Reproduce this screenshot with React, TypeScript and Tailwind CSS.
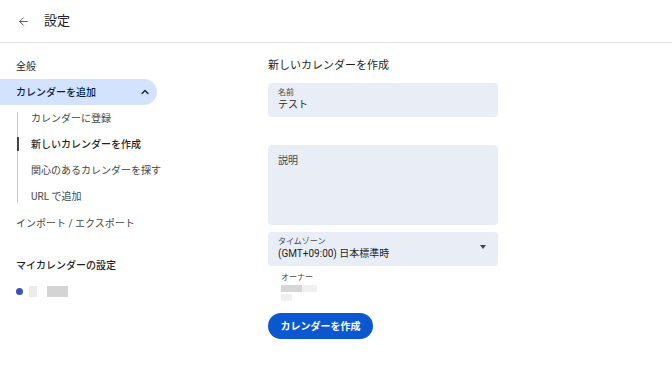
import React from 'react';
import { ArrowLeft, ChevronUp } from 'lucide-react';

const font = { fontFamily: 'Roboto, "Noto Sans CJK JP", sans-serif' };

const subItems = [
  { label: 'カレンダーに登録', active: false },
  { label: '新しいカレンダーを作成', active: true },
  { label: '関心のあるカレンダーを探す', active: false },
  { label: 'URL で追加', active: false },
];

export default function App() {
  return (
    <div className="w-[672px] h-[378px] bg-white text-[#1f1f1f] overflow-hidden" style={font}>
      {/* ヘッダー */}
      <div className="h-[43px] flex items-center border-b border-[#e3e3e3] pl-[17px]">
        <ArrowLeft size={13} strokeWidth={1.6} className="text-[#444746]" />
        <span className="ml-[14px] text-[13px] text-[#1f1f1f]">設定</span>
      </div>

      <div className="flex">
        {/* サイドバー */}
        <div className="w-[268px] shrink-0 pt-[10px] text-[10px]">
          <div className="h-[26px] flex items-center pl-[16px] text-[#1f1f1f]">全般</div>
          <div className="w-[157px] h-[26px] flex items-center justify-between pl-[16px] pr-[6px] bg-[#d3e3fd] rounded-r-full font-medium text-[#041e49]">
            <span>カレンダーを追加</span>
            <ChevronUp size={12} strokeWidth={2.5} />
          </div>
          <div className="relative">
            <div className="absolute left-[17px] top-[7px] bottom-[6px] w-px bg-[#c4c7c5]" />
            {subItems.map(item => (
              <div key={item.label} className="relative h-[26px] flex items-center pl-[31px]">
                {item.active && <div className="absolute left-[16.5px] top-[6px] h-[14px] w-[2px] bg-[#444746]" />}
                <span className={item.active ? 'font-medium text-[#1f1f1f]' : 'text-[#444746]'}>{item.label}</span>
              </div>
            ))}
          </div>
          <div className="h-[28px] flex items-center pl-[16px] text-[#444746]">インポート / エクスポート</div>
          <div className="mt-[15px] h-[26px] flex items-center pl-[16px] font-medium text-[#1f1f1f]">マイカレンダーの設定</div>
          <div className="h-[26px] flex items-center pl-[16px]">
            <div className="w-[7px] h-[7px] rounded-full bg-[#3f51b5]" />
            <div className="ml-[6px] w-[8px] h-[11px] bg-[#ececec]" />
            <div className="ml-[10px] w-[21px] h-[11px] bg-[#d4d4d4]" />
          </div>
        </div>

        {/* メイン */}
        <div className="flex-1 pt-[10px]">
          <div className="h-[26px] flex items-center text-[11px] text-[#1f1f1f]">新しいカレンダーを作成</div>
          <div className="mt-[4px] w-[230px] h-[34px] bg-[#e9eef6] rounded-[4px] pl-[10px] pt-[4px]">
            <div className="text-[8px] leading-[11px] text-[#444746]">名前</div>
            <div className="text-[10px] leading-[14px] text-[#1f1f1f]">テスト</div>
          </div>
          <div className="mt-[28px] w-[230px] h-[80px] bg-[#e9eef6] rounded-[4px] pl-[10px] pt-[9px]">
            <div className="text-[10px] leading-[14px] text-[#444746]">説明</div>
          </div>
          <div className="mt-[7px] w-[230px] h-[34px] bg-[#e9eef6] rounded-[4px] pl-[10px] pr-[12px] pt-[4px] flex justify-between">
            <div>
              <div className="text-[8px] leading-[11px] text-[#444746]">タイムゾーン</div>
              <div className="text-[10px] leading-[14px] text-[#1f1f1f]">(GMT+09:00) 日本標準時</div>
            </div>
            <div className="pt-[9px]">
              <div className="w-0 h-0 border-l-[3.5px] border-r-[3.5px] border-t-[4px] border-l-transparent border-r-transparent border-t-[#444746]" />
            </div>
          </div>
          <div className="mt-[6px] pl-[13px]">
            <div className="text-[8px] leading-[11px] text-[#444746]">オーナー</div>
            <div className="mt-[2px] flex">
              <div className="w-[21px] h-[7px] bg-[#d6d6d6]" />
              <div className="w-[15px] h-[7px] bg-[#f0f0f0]" />
            </div>
            <div className="mt-[2px] w-[11px] h-[7px] bg-[#f0f0f0]" />
          </div>
          <button className="mt-[12px] w-[105px] h-[26px] rounded-full bg-[#0b57d0] text-white text-[10px] font-bold flex items-center justify-center">
            カレンダーを作成
          </button>
        </div>
      </div>
    </div>
  );
}
